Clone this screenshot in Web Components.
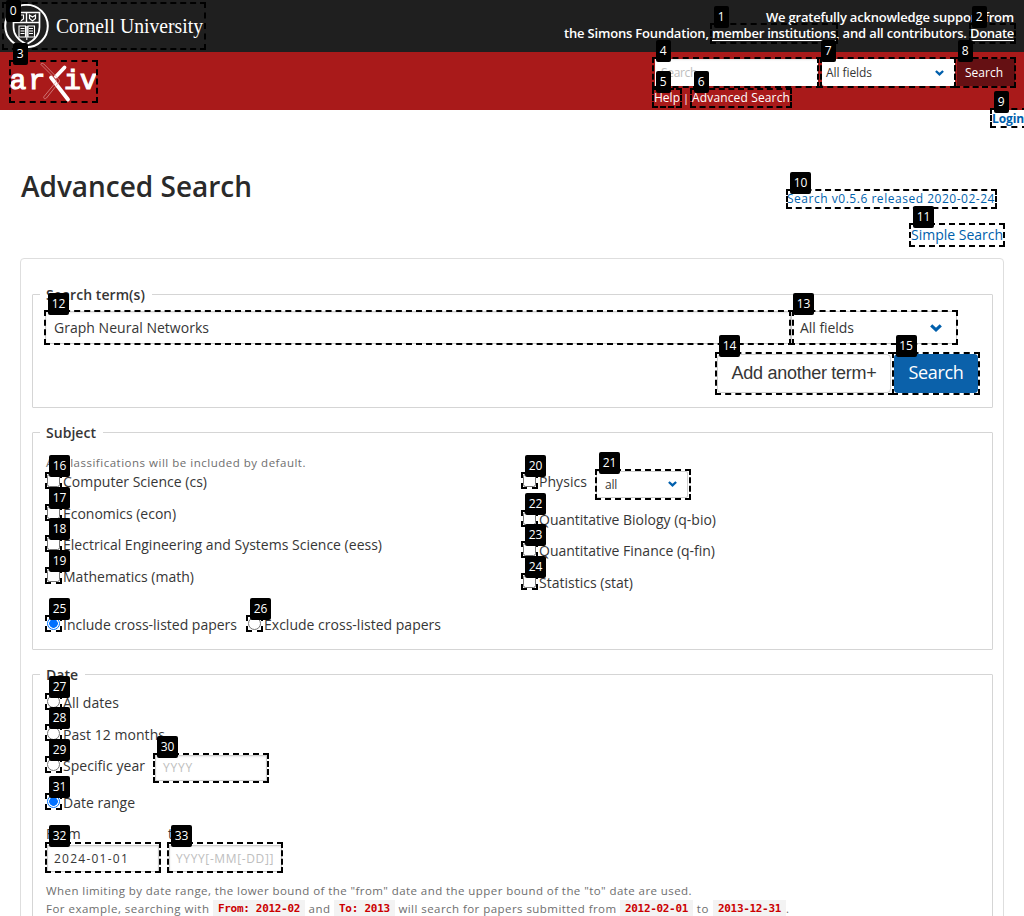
<!DOCTYPE html>
<html lang="en">
<head>
<meta charset="utf-8">
<title>Advanced Search | arXiv e-print repository</title>
<style>
html,body{margin:0;padding:0;background:#fff;height:916px;overflow:hidden}
body{position:relative;font-family:"Open Sans","Noto Sans",sans-serif;font-size:14px;color:#363636}
</style>
</head>
<body>
<ax-page></ax-page>
<ax-marks></ax-marks>
<script>
const define = (name, html, setup) => customElements.define(name, class extends HTMLElement {
  connectedCallback() {
    if (this.shadowRoot) return;
    const t = document.createElement('template');
    t.innerHTML = html;
    this.attachShadow({mode: 'open'}).append(t.content.cloneNode(true));
    if (setup) setup(this, this.shadowRoot);
  }
});

// A run of text whose tracking is set so that it spans a given width.
define('ax-text', `<style>:host{display:inline-block;white-space:pre;flex:none}</style><slot></slot>`, el => {
  const w = +el.getAttribute('w');
  if (!w) return;
  const now = el.getBoundingClientRect().width;
  el.style.letterSpacing = ((w - now) / el.textContent.length).toFixed(4) + 'px';
});

define('ax-input', `<style>
:host{display:flex;align-items:center;box-sizing:border-box;border:1px solid #cfcfcf;background:#fff;box-shadow:inset 0 1px 2px rgba(10,10,10,.1);color:#363636;padding-left:8px;flex:none}
:host([hint]){color:#bebebe}
</style><slot></slot>`);

define('ax-select', `<style>
:host{display:flex;align-items:center;justify-content:space-between;box-sizing:border-box;border:1px solid #cfcfcf;border-radius:2px;background:#fff;color:#363636;padding:0 14px 0 8px;flex:none}
svg{display:block;width:var(--arrow,12px);height:8px}
</style><slot></slot><svg viewBox="0 0 12 8"><path d="M1.2 1.3 6 5.8 10.8 1.3" fill="none" stroke="#005fac" stroke-width="3.1"/></svg>`);

define('ax-check', `<style>
:host{display:flex;align-items:center;gap:3px;flex:none}
i{box-sizing:border-box;width:13px;height:13px;border:1px solid #767676;border-radius:2.5px;background:#fff;position:relative;top:-1px}
:host([radio]) i{border-radius:50%}
:host([on]) i{border-color:#0075ff;background:radial-gradient(circle,#0070ff 0 4px,#fff 4.6px)}
</style><i></i><slot></slot>`);

define('ax-fieldset', `<style>
:host{display:block}
fieldset{box-sizing:border-box;height:100%;margin:0;border:1px solid #d5d5d5;border-radius:1px;padding:0 7px;min-width:0}
legend{font-weight:600;height:23px;line-height:24px;padding:0 7px 0 6px;margin-bottom:1px}
</style><fieldset><legend><slot name="legend"></slot></legend><slot></slot></fieldset>`);

define('ax-code', `<style>
:host{display:inline-flex;align-items:center;height:18px;background:#f3f3f3;color:#cb0000;font:bold 11px "DejaVu Sans Mono",monospace;padding:0 5px;flex:none}
</style><slot></slot>`);

define('ax-header', `<style>
:host{display:block}
.top{height:52px;background:#1f1f1f;color:#fff;display:flex;justify-content:space-between}
.brand{display:block;width:206px;height:52px}
.ack{display:flex;flex-direction:column;align-items:flex-end;padding:9px 10px 0 0;font-size:13px;font-weight:600;line-height:16px}
u{text-decoration:underline;text-underline-offset:2px}
.red{height:58px;background:#a91a1a;display:flex;justify-content:space-between}
.logo{width:100px;height:58px}
.search{width:363px;margin-right:7px;padding-top:7px;color:#fff;font-size:12px}
.bar{display:flex;height:27px;margin-left:1px}
.bar ax-input{width:163px;height:27px;border:0;padding-left:6px}
.bar ax-select{width:133px;height:27px;border:0;margin-left:4px;padding:0 11px 0 4px;--arrow:9px}
.bar ax-text{margin-top:-1px}
.go{box-sizing:border-box;width:58px;height:27px;margin-left:2px;background:#651013;display:flex;align-items:center;padding-left:8px}
.links{height:20px;display:flex;align-items:center;margin-top:1px}
.login{display:flex;justify-content:flex-end;height:18px;line-height:18px;font-size:12px;font-weight:700;color:#005fac}
</style>
<div class="top">
<svg class="brand" viewBox="0 0 206 52" fill="none" stroke="#fff">
<circle cx="26.5" cy="26" r="21.3" stroke-width="2"/>
<path d="M13.5 12.5h26v14.5c0 8-5 13.5-13 17.2-8-3.7-13-9.2-13-17.2z" stroke-width="1.7" fill="#1f1f1f"/>
<path d="M14 22.5h25M26.5 13v9.5" stroke-width="1.4"/>
<path d="M18 15v4l2.500 2 3-2v-4zM29.500 15v3.500l3 2.500 3-2.500V15l-3 2z" stroke-width="1.2"/>
<path d="M19 26h6.500v11H19zM28 26h6.500v11H28zM20.500 28.500h4M20.500 31h4M20.500 33.500h4M29 28.500h4M29 31h4M29 33.500h4M26.800 26v14" stroke-width="1.1"/>
<text x="56" y="33" fill="#fff" stroke="none" font-family="Liberation Serif, serif" font-size="21" textLength="147" lengthAdjust="spacingAndGlyphs">Cornell University</text>
</svg>
<div class="ack"><div><ax-text w="248">We gratefully acknowledge support from</ax-text></div>
<div style="display:flex"><ax-text w="148">the Simons Foundation, </ax-text><ax-text w="124"><u>member institutions</u></ax-text><ax-text w="134">, and all contributors. </ax-text><ax-text w="44"><u>Donate</u></ax-text></div></div>
</div>
<div class="red">
<svg class="logo" viewBox="0 52 100 58" fill="none" stroke="#fff">
<g fill="#fff" stroke="#fff" stroke-width="1.2" font-family="Liberation Mono, monospace" font-size="28"><text x="9.5 28.5" y="88.5">ar</text><text x="64 80" y="88.5">iv</text></g>
<path d="M51 77.500 68 99.500" stroke-width="3.8" stroke-linecap="round"/><path d="M64.500 67.500 56 76.500" stroke-width="3.8" stroke-linecap="round"/>
<path d="M41 64.500c0-1.500 2-1.500 2.800-.5L59 79.500c1 1.500.5 2-.5 3.300L46.500 98c-1.500 1.500-3.500.5-2.500-1.500L56 82c.8-1 .6-1.500 0-2.500z" stroke-width=".7" stroke="#dc9c9c"/>
</svg>
<div class="search">
<div class="bar"><ax-input hint><ax-text w="36">Search</ax-text></ax-input><ax-select><ax-text w="46">All fields</ax-text></ax-select><div class="go"><ax-text w="38">Search</ax-text></div></div>
<div class="links"><ax-text w="26">Help</ax-text><span style="margin:0 3px 0 3px;font-size:11px">|</span><ax-text w="98">Advanced Search</ax-text></div>
</div></div>
<div class="login"><ax-text w="32">Login</ax-text></div>`);

define('ax-page', `<style>
:host{display:block}
.head{display:flex;justify-content:space-between;height:130px;box-sizing:border-box;padding:43px 21px 0 21px}
h1{margin:0;font-size:28px;line-height:30px;font-weight:550;color:#2a2a2a}
.vers{display:flex;flex-direction:column;align-items:flex-end;color:#005fac;padding-top:18px}
.vers div{height:20px;line-height:20px}
.panel{box-sizing:border-box;width:984px;height:680px;margin-left:20px;border:1px solid #dedede;border-radius:4px;padding:24px 10px 0 11px}
ax-fieldset{margin-bottom:13px}
.r{display:flex;align-items:center}
.term{height:33px;margin:4px 0 0 5px}
.btns{height:41px;justify-content:flex-end;margin-top:9px;padding-right:7px}
.add{box-sizing:border-box;width:174px;height:39px;border:1px solid #cfcfcf;border-radius:4px;font:18px "Liberation Sans",sans-serif;display:flex;align-items:center;justify-content:center}
.sub{width:84px;height:39px;margin-left:3px;border-radius:4px;background:#0b61aa;color:#fff;font-size:18px;line-height:37px;text-align:center}
.note{font-size:11.5px;color:#6e6e6e;height:18px;padding-left:6px}
.cols{display:grid;grid-template-columns:476px 1fr;padding-left:7px}
.cols .r{height:31.6px}
.date .r:not(.note){padding-left:7px;height:31.5px}
</style>
<ax-header></ax-header>
<div class="head"><h1><ax-text w="231">Advanced Search</ax-text></h1>
<div class="vers"><div style="font-size:12px;margin-right:8px"><ax-text w="208">Search v0.5.6 released 2020-02-24</ax-text></div><div style="margin-top:16px"><ax-text w="92">Simple Search</ax-text></div></div></div>
<div class="panel">
<ax-fieldset style="height:125px"><ax-text slot="legend" w="99">Search term(s)</ax-text>
<div class="r term"><ax-input style="width:746px;height:33px"><ax-text w="155">Graph Neural Networks</ax-text></ax-input><ax-select style="width:166px;height:33px"><ax-text w="54">All fields</ax-text></ax-select></div>
<div class="r btns"><div class="add"><ax-text w="145">Add another term+</ax-text></div><div class="sub"><ax-text w="55">Search</ax-text></div></div>
</ax-fieldset>
<ax-fieldset style="height:229px"><ax-text slot="legend" w="50">Subject</ax-text>
<div class="r note" style="margin-top:8px"><ax-text w="260">All classifications will be included by default.</ax-text></div>
<div class="cols" style="margin-top:-5px"><div>
<div class="r"><ax-check><ax-text w="144">Computer Science (cs)</ax-text></ax-check></div>
<div class="r"><ax-check><ax-text w="113">Economics (econ)</ax-text></ax-check></div>
<div class="r"><ax-check><ax-text w="319">Electrical Engineering and Systems Science (eess)</ax-text></ax-check></div>
<div class="r"><ax-check><ax-text w="131">Mathematics (math)</ax-text></ax-check></div></div>
<div><div class="r" style="margin-bottom:6px"><ax-check><ax-text w="48">Physics</ax-text></ax-check><ax-select style="width:92px;height:27px;margin:5px 0 0 9px;font-size:12px;padding-right:10px;--arrow:9px"><ax-text w="12">all</ax-text></ax-select></div>
<div class="r"><ax-check><ax-text w="177">Quantitative Biology (q-bio)</ax-text></ax-check></div>
<div class="r"><ax-check><ax-text w="176">Quantitative Finance (q-fin)</ax-text></ax-check></div>
<div class="r"><ax-check><ax-text w="94">Statistics (stat)</ax-text></ax-check></div></div></div>
<div class="r" style="height:32px;margin:10px 0 0 7px"><ax-check radio on><ax-text w="174">Include cross-listed papers</ax-text></ax-check><ax-check radio style="margin-left:11px"><ax-text w="177">Exclude cross-listed papers</ax-text></ax-check></div>
</ax-fieldset>
<ax-fieldset class="date" style="height:290px"><ax-text slot="legend" w="32">Date</ax-text>
<div class="r"><ax-check radio><ax-text w="56">All dates</ax-text></ax-check></div>
<div class="r" style="height:31px"><ax-check radio><ax-text w="102">Past 12 months</ax-text></ax-check></div>
<div class="r" style="margin-bottom:6px"><ax-check radio><ax-text w="82">Specific year</ax-text></ax-check><ax-input hint style="width:112px;height:26px;margin:5px 0 0 10px;font-size:12px;padding-left:7px"><ax-text w="30">YYYY</ax-text></ax-input></div>
<div class="r"><ax-check radio on><ax-text w="72">Date range</ax-text></ax-check></div>
<div class="r" style="height:24px;margin-top:3px;padding-left:6px"><ax-text w="35" style="margin-right:87px">From</ax-text><ax-text w="13">to</ax-text></div>
<div class="r" style="height:27px;margin-top:-1px;font-size:12px"><ax-input style="width:112px;height:27px;padding-left:6px"><ax-text w="75">2024-01-01</ax-text></ax-input><ax-input hint style="width:113px;height:27px;margin-left:10px;padding-left:6px"><ax-text w="98">YYYY[-MM[-DD]]</ax-text></ax-input></div>
<div class="r note" style="margin-top:10px"><ax-text w="646">When limiting by date range, the lower bound of the "from" date and the upper bound of the "to" date are used.</ax-text></div>
<div class="r note"><ax-text w="167">For example, searching with </ax-text><ax-code><ax-text w="82">From: 2012-02</ax-text></ax-code><ax-text w="29"> and </ax-text><ax-code><ax-text w="51">To: 2013</ax-text></ax-code><ax-text w="225"> will search for papers submitted from </ax-text><ax-code><ax-text w="63">2012-02-01</ax-text></ax-code><ax-text w="20"> to </ax-text><ax-code><ax-text w="63">2013-12-31</ax-text></ax-code><span>.</span></div>
</ax-fieldset>
</div>`);

// Numbered outlines laid over the interactive elements: [left, top, right, bottom].
const MARKS = [
[2,2,206,50],[710,23,838,44],[969,23,1016,44],[9,60,98,103],[652,57,822,88],[652,88,682,108],[690,88,792,108],[817,57,956,88],[954,57,1016,88],[990,108,1028,128],
[786,189,997,209],[909,223,1005,247],[44,310,794,345],[789,310,958,345],[715,352,894,395],[891.5,352,980,395],
[45,472,62,489],[45,504,62,521],[45,535,62,552],[45,567,62,584],[521,472,538,489],[595,469,691,500],[521,510,538,527],[521,541,538,558],[521,573,538,590],
[45,615,62,632],[246,615,263,632],[45,693,62,710],[45,724,62,741],[45,756,62,773],[153,753,269,783],[45,793,62,810],[45,842,161,873],[167,842,283,873]];
define('ax-marks', `<style>
:host{position:absolute;left:0;top:0;width:1024px;height:916px;overflow:hidden;pointer-events:none}
div{position:absolute;box-sizing:border-box;border:2px dashed #000}
b{position:absolute;height:22px;line-height:22px;background:#000;color:#fff;border-radius:2px;font-weight:400;font-size:12px;text-align:center}
</style>`, (el, root) => MARKS.forEach(([x, y, r, b], i) => {
  const box = document.createElement('div');
  box.style.cssText = `left:${x}px;top:${y}px;width:${r - x}px;height:${b - y}px`;
  const tag = document.createElement('b');
  tag.textContent = i;
  tag.style.cssText = `left:${x + 4 - (i === 2 ? 1 : 0)}px;top:${Math.max(0, y - 17)}px;width:${i < 10 ? 14.5 : 21}px`;
  root.append(box, tag);
}));
</script>
</body>
</html>
